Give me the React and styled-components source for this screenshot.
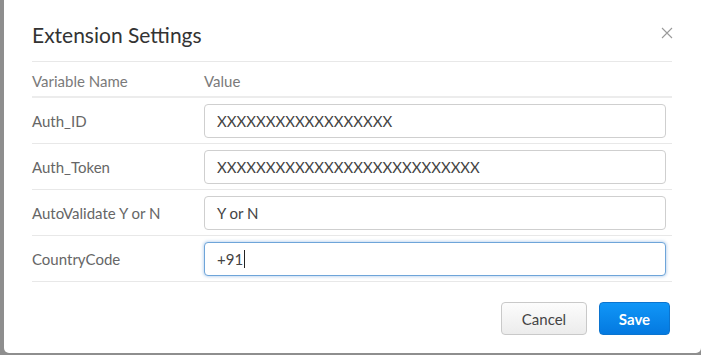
import React from "react";
import styled, { createGlobalStyle } from "styled-components";

const GlobalStyle = createGlobalStyle`
  html, body {
    margin: 0;
    padding: 0;
    background: #8e8e8e;
    font-family: Lato, "Open Sans", Arial, sans-serif;
  }
`;

// === 스타일 ===
const Backdrop = styled.div`
  width: 701px;
  height: 355px;
  display: flex;
  align-items: flex-start;
  padding-left: 4px;
  box-sizing: border-box;
  overflow: hidden;
`;

const Modal = styled.div`
  width: 697px;
  height: 353px;
  background: #fff;
  border-radius: 0 0 5px 5px;
  box-sizing: border-box;
  padding: 0 29px 0 28px;
  display: flex;
  flex-direction: column;
`;

const Header = styled.div`
  display: flex;
  justify-content: space-between;
  align-items: flex-start;
  padding-top: 22px;
  height: 39px;
  border-bottom: 1px solid #e8e8e8;
`;

const Title = styled.h2`
  margin: 0;
  font-size: 21px;
  line-height: 25px;
  font-weight: 400;
  color: #333;
`;

const CloseButton = styled.button`
  border: none;
  background: none;
  padding: 0;
  margin: 5px -1px 0 0;
  width: 12px;
  height: 12px;
  cursor: pointer;
  display: flex;
`;

const Table = styled.div`
  display: flex;
  flex-direction: column;
`;

const HeadRow = styled.div`
  display: grid;
  grid-template-columns: 172px 1fr;
  align-items: center;
  height: 36px;
  padding-top: 3px;
  box-sizing: border-box;
  border-bottom: 2px solid #ececec;
  font-size: 15px;
  color: #7a7a7a;
`;

const Row = styled.div`
  display: grid;
  grid-template-columns: 172px 1fr;
  align-items: center;
  padding: 6px 6px 5px 0;
  border-bottom: 1px solid #e8e8e8;
`;

const Label = styled.div`
  font-size: 15px;
  color: #666;
`;

const ValueBox = styled.div`
  height: 34px;
  box-sizing: border-box;
  border: 1px solid ${(props) => (props.$focused ? "#6ea5d9" : "#cfcfcf")};
  border-radius: 4px;
  padding: 0 12px;
  display: flex;
  align-items: center;
  font-size: 15px;
  color: #444;
  background: #fff;
  box-shadow: ${(props) =>
    props.$focused ? "0 0 3px 1px rgba(90, 150, 215, 0.35)" : "none"};
`;

const Caret = styled.span`
  display: inline-block;
  width: 1px;
  height: 18px;
  background: #222;
  margin-left: 1px;
`;

const Footer = styled.div`
  display: flex;
  justify-content: flex-end;
  gap: 12px;
  margin-top: 20px;
  padding-right: 2px;
`;

const Button = styled.button`
  height: 33px;
  box-sizing: border-box;
  border-radius: 4px;
  font-family: inherit;
  font-size: 15px;
  cursor: pointer;
  padding: 0;
  width: ${(props) => (props.$primary ? "71px" : "86px")};
  font-weight: ${(props) => (props.$primary ? 700 : 400)};
  color: ${(props) => (props.$primary ? "#fff" : "#444")};
  border: 1px solid ${(props) => (props.$primary ? "#0b74cf" : "#c9c9c9")};
  background: ${(props) =>
    props.$primary
      ? "linear-gradient(#1096f7, #0479e0)"
      : "linear-gradient(#fcfcfc, #ececec)"};
`;

const fields = [
  { name: "Auth_ID", value: "XXXXXXXXXXXXXXXXXX" },
  { name: "Auth_Token", value: "XXXXXXXXXXXXXXXXXXXXXXXXXXX" },
  { name: "AutoValidate Y or N", value: "Y or N" },
  { name: "CountryCode", value: "+91", focused: true },
];

// === 컴포넌트 ===
const App = () => {
  return (
    <>
      <GlobalStyle />
      <Backdrop>
        <Modal>
          <Header>
            <Title>Extension Settings</Title>
            <CloseButton aria-label="close">
              <svg width="12" height="12" viewBox="0 0 12 12">
                <path
                  d="M1 1 L11 11 M11 1 L1 11"
                  stroke="#9a9a9a"
                  strokeWidth="1.1"
                  fill="none"
                />
              </svg>
            </CloseButton>
          </Header>

          <Table>
            <HeadRow>
              <div>Variable Name</div>
              <div>Value</div>
            </HeadRow>
            {fields.map((field) => (
              <Row key={field.name}>
                <Label>{field.name}</Label>
                <ValueBox $focused={field.focused}>
                  {field.value}
                  {field.focused && <Caret />}
                </ValueBox>
              </Row>
            ))}
          </Table>

          <Footer>
            <Button>Cancel</Button>
            <Button $primary>Save</Button>
          </Footer>
        </Modal>
      </Backdrop>
    </>
  );
};

export default App;
